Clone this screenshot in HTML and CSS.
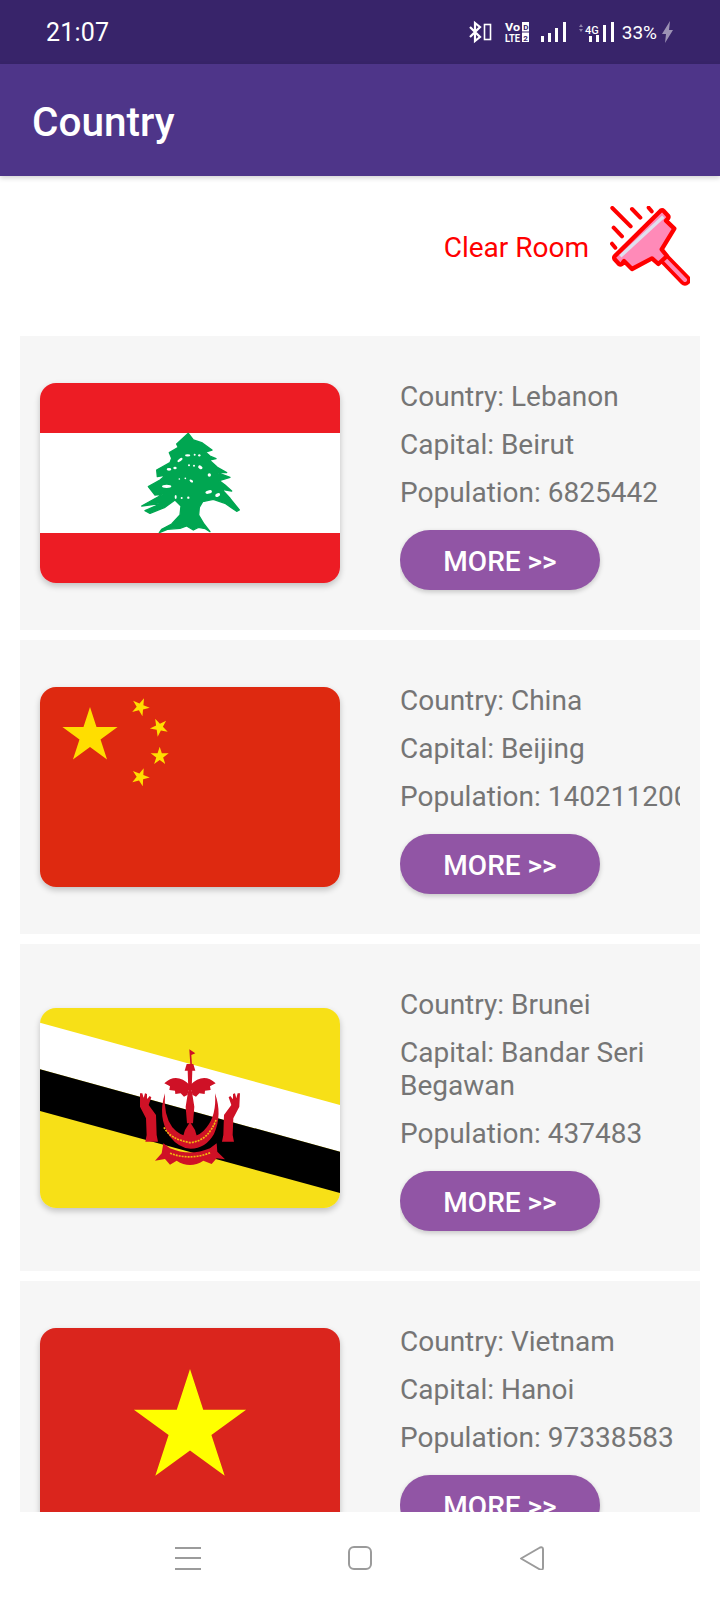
FILE: index.html
```html
<!DOCTYPE html>
<html lang="en">
<head>
<meta charset="utf-8">
<title>Country</title>
<link rel="stylesheet" href="styles.css">
</head>
<body>
<div class="screen">
  <header class="status">
    <span class="time">21:07</span>
    <div class="status-icons">
      <svg class="si si-bt" viewBox="0 0 24 20"><path d="M1 5l10 10-5 4V1l5 4L1 15" fill="none" stroke="#fff" stroke-width="2.200"/><rect x="15.5" y="2.500" width="6" height="15" fill="none" stroke="#fff" stroke-width="1.600"/></svg>
      <svg class="si si-volte" viewBox="0 0 24 20"><text x="0" y="9" class="si-t" textLength="15" lengthAdjust="spacingAndGlyphs">Vo</text><text x="0" y="19.500" class="si-t" textLength="15" lengthAdjust="spacingAndGlyphs">LTE</text><rect x="17" y="0" width="7" height="9.500" fill="#fff"/><rect x="17" y="10.500" width="7" height="9.500" fill="#fff"/><text x="18.200" y="8" class="si-d">D</text><text x="18.200" y="18.500" class="si-d">2</text></svg>
      <svg class="si si-sig" viewBox="0 0 25 20"><rect x="0" y="14" width="3" height="6" fill="#fff"/><rect x="7" y="11" width="3" height="9" fill="#fff"/><rect x="14" y="6" width="3" height="14" fill="#fff"/><rect x="22" y="0" width="3" height="20" fill="#fff"/></svg>
      <svg class="si si-4g" viewBox="0 0 37 20"><path d="M2 5l2-3 2 3zM2 7l2 3 2-3z" fill="#8f84ab"/><text x="8" y="11.500" class="si-g">4G</text><rect x="12" y="14" width="3" height="6" fill="#fff"/><rect x="19" y="13" width="3" height="7" fill="#fff"/><rect x="26" y="3" width="3" height="17" fill="#fff"/><rect x="34" y="0" width="3" height="20" fill="#fff"/></svg>
      <span class="batt">33%</span>
      <svg class="si si-bolt" viewBox="0 0 11 22"><path d="M8 0L0 13h4L3 22l8-13H7z" fill="#9c92b5"/></svg>
    </div>
  </header>
  <div class="appbar"><h1 class="title">Country</h1></div>
  <main class="content">
    <div class="clear-row">
      <span class="clear-label">Clear Room</span>
      <svg class="broom" viewBox="570 48 240 240">
        <g fill="none" stroke="#f00" stroke-linecap="round" stroke-width="12">
          <path d="M577 54l55 55M636 57l25 26M686 53l9 11M581 113l25 26M576 161l10 12"/>
        </g>
        <path d="M727 200l68 70" stroke="#f00" stroke-width="34" stroke-linecap="round"/>
        <path d="M727 200l68 70" stroke="#ff8ab8" stroke-width="12" stroke-linecap="round"/>
        <path d="M584 199L722 62q5-3 9 1l13 14q3 4 0 8l-6 7 25 24-38 62 16 20-26 24-19-17-60 32-24-24-6 9q-5 3-9 0l-13-14q-3-5 0-9z" fill="#ff8ab8" stroke="#f00" stroke-width="13" stroke-linejoin="round"/>
        <path d="M601 199L730 80" stroke="#dfe0ee" stroke-width="10"/>
      </svg>
    </div>
    <div class="list">
      <article class="card">
        <svg class="flag" viewBox="0 0 300 200">
          <rect width="300" height="200" fill="#ed1c24"/>
          <rect y="50" width="300" height="100" fill="#fff"/>
          <g transform="translate(90 37) scale(.3333)">
            <path fill="#00a651" stroke="#00a651" stroke-width="4" stroke-linejoin="round" d="M175 40L190 60L215 68L246 90L226 96L240 108L258 116L238 120L262 142L290 158L262 158L300 172L268 182L285 195L305 213L275 208L300 235L328 270L320 274L285 250L250 238L218 245L208 262L206 285L222 312L240 335L226 326L205 322L190 330L170 318L150 325L112 328L88 338L95 328L125 312L150 285L153 258L135 240L105 262L60 280L45 272L95 250L35 258L100 222L75 225L55 200L90 180L108 165L82 170L80 150L120 128L125 115L118 98L145 82L140 72z"/>
            <g fill="#fff">
              <ellipse cx="150" cy="120" rx="9" ry="4" transform="rotate(-35 150 120)"/>
              <ellipse cx="173" cy="106" rx="8" ry="3.500"/><circle cx="194" cy="104" r="3"/><circle cx="208" cy="106" r="3.500"/>
              <ellipse cx="117" cy="148" rx="7" ry="4"/><ellipse cx="135" cy="144" rx="5" ry="3.500"/>
              <circle cx="177" cy="136" r="3"/><circle cx="192" cy="137" r="3"/><ellipse cx="211" cy="142" rx="7" ry="5" transform="rotate(30 211 142)"/>
              <circle cx="238" cy="165" r="5"/><circle cx="148" cy="177" r="2.500"/><circle cx="166" cy="175" r="2.500"/><ellipse cx="184" cy="183" rx="6" ry="3.500" transform="rotate(35 184 183)"/>
              <ellipse cx="110" cy="199" rx="14" ry="5"/><ellipse cx="236" cy="216" rx="10" ry="5" transform="rotate(-15 236 216)"/><ellipse cx="263" cy="225" rx="8" ry="5" transform="rotate(-30 263 225)"/>
              <ellipse cx="137" cy="231" rx="3" ry="6"/><circle cx="155" cy="234" r="3"/><circle cx="175" cy="233" r="3.500"/>
            </g>
          </g>
        </svg>
        <div class="info">
          <p class="line">Country: Lebanon</p>
          <p class="line">Capital: Beirut</p>
          <p class="line pop">Population: 6825442</p>
          <button class="more">MORE &gt;&gt;</button>
        </div>
      </article>
      <article class="card">
        <svg class="flag" viewBox="0 0 300 200">
          <defs><polygon id="star" points="0,-1 .2245,-.309 .951,-.309 .363,.118 .588,.809 0,.382 -.588,.809 -.363,.118 -.951,-.309 -.2245,-.309"/></defs>
          <rect width="300" height="200" fill="#de2910"/>
          <g fill="#ffde00">
            <use href="#star" transform="translate(50 49) scale(29)"/>
            <use href="#star" transform="translate(100.300 20) rotate(23) scale(9.500)"/>
            <use href="#star" transform="translate(119.300 40.300) rotate(46) scale(9.500)"/>
            <use href="#star" transform="translate(119.700 69.300) scale(9.500)"/>
            <use href="#star" transform="translate(100.300 90) rotate(21) scale(9.500)"/>
          </g>
        </svg>
        <div class="info">
          <p class="line">Country: China</p>
          <p class="line">Capital: Beijing</p>
          <p class="line pop">Population: 1402112000</p>
          <button class="more">MORE &gt;&gt;</button>
        </div>
      </article>
      <article class="card">
        <svg class="flag" viewBox="0 0 300 200">
          <rect width="300" height="200" fill="#f7e017"/>
          <path d="M0 14.700L300 97v46.700L0 61.300z" fill="#fff"/>
          <path d="M0 61.300L300 143.700V185L0 103z" fill="#000"/>
          <g transform="translate(80 32) scale(.3333)">
            <g fill="#cf1126">
              <path d="M208 28l18 12-12 5 2 30h-5z"/>
              <path d="M194 92l6-20h20l6 20z"/>
              <path d="M210 136Q170 96 133 130L150 139L148 150L165 152L166 162L182 160L192 170L203 164L205 150H215L217 164L228 170L238 160L254 162L255 152L272 150L270 139L287 130Q250 96 210 136z"/>
              <path d="M203 90h14l-2 60 8 50-4 50h-18l-4-50 8-50z"/>
              <path d="M186 300l9-30 15-24 15 24 9 30q-24 10-48 0z"/>
              <path d="M135 160Q112 230 148 288Q178 326 212 326Q257 326 282 282Q308 225 285 160Q290 225 260 262Q240 290 212 290Q180 290 157 262Q130 225 135 160z"/>
              <path d="M60 160l7 0 4 15 4-15 6 2 0 16 8-10 5 4-8 23 22 30 2 60 4 20H76l4-20-2-50-18-35z"/>
              <path d="M360 160l-7 0-4 15-4-15-6 2 0 16-8-10-5 4 8 23-22 30-2 60-4 20h36l-4-20 2-50 18-35z"/>
              <path d="M130 310L150 325Q210 350 270 325L290 310L292 335L315 358L290 355L275 372L250 362Q210 388 170 362L150 374L135 357L105 362L125 340z"/>
            </g>
            <g fill="none" stroke="#f2b80f" stroke-width="5" stroke-dasharray="6 3">
              <path d="M132 262Q150 298 212 308Q265 302 288 240"/>
              <path d="M150 340Q210 362 272 338"/>
            </g>
          </g>
        </svg>
        <div class="info">
          <p class="line">Country: Brunei</p>
          <p class="line">Capital: Bandar Seri Begawan</p>
          <p class="line pop">Population: 437483</p>
          <button class="more">MORE &gt;&gt;</button>
        </div>
      </article>
      <article class="card">
        <svg class="flag" viewBox="0 0 300 200">
          <rect width="300" height="200" fill="#da251d"/>
          <use href="#star" fill="#ff0" transform="translate(150 100) scale(59)"/>
        </svg>
        <div class="info">
          <p class="line">Country: Vietnam</p>
          <p class="line">Capital: Hanoi</p>
          <p class="line pop">Population: 97338583</p>
          <button class="more">MORE &gt;&gt;</button>
        </div>
      </article>
    </div>
  </main>
  <nav class="navbar">
    <svg class="nav-ic" viewBox="0 0 26 24"><path d="M0 2h26M0 12h26M0 23h26" stroke="#9b9b9b" stroke-width="2"/></svg>
    <svg class="nav-ic" viewBox="0 0 26 24"><rect x="2" y="1" width="22" height="22" rx="5" fill="none" stroke="#9b9b9b" stroke-width="2"/></svg>
    <svg class="nav-ic" viewBox="0 0 26 24"><path d="M2 12.500L21 1.500q3-1 3 2v18q0 3-3 2z" fill="none" stroke="#9b9b9b" stroke-width="2" stroke-linejoin="round"/></svg>
  </nav>
</div>
</body>
</html>
```

FILE: styles.css
```css
* { box-sizing: border-box; }
html, body { margin: 0; padding: 0; background: #fff; }
body { font-family: Roboto, "Liberation Sans", sans-serif; }
.screen { width: 720px; height: 1600px; display: flex; flex-direction: column; overflow: hidden; }

.status { height: 64px; flex: none; background: #38246a; color: #fff; display: flex; align-items: center; justify-content: space-between; padding: 0 47px 0 46px; }
.time { font-size: 25px; letter-spacing: .2px; }
.status-icons { display: flex; align-items: center; }
.si { display: block; height: 20px; overflow: visible; }
.si-bt { width: 24px; margin-right: 12px; }
.si-volte { width: 24px; margin-right: 12px; }
.si-sig { width: 25px; margin-right: 11px; }
.si-4g { width: 37px; margin-right: 8px; }
.si-t { font: 700 11px Roboto, sans-serif; fill: #fff; }
.si-d { font: 700 8px Roboto, sans-serif; fill: #38246a; }
.si-g { font: 500 11px Roboto, sans-serif; fill: #fff; }
.batt { font-size: 19px; margin-right: 5px; }
.si-bolt { width: 11px; height: 22px; }

.appbar { height: 112px; flex: none; background: #4e3589; display: flex; align-items: center; padding: 0 32px; box-shadow: 0 2px 5px rgba(0, 0, 0, .18); position: relative; }
.title { margin: 4px 0 0; color: #fff; font-size: 40.5px; font-weight: 500; }

.content { flex: 1; min-height: 0; overflow: hidden; }
.clear-row { height: 160px; display: flex; align-items: flex-start; justify-content: flex-end; gap: 21px; padding: 30px 30px 0 0; }
.clear-label { color: #f00; font-size: 28px; line-height: 33px; margin-top: 25px; }
.broom { width: 80px; height: 80px; display: block; }

.list { display: flex; flex-direction: column; gap: 10px; padding: 0 20px; }
.card { background: #f6f6f6; display: flex; align-items: center; gap: 60px; padding: 0 20px; flex: none; }
.flag { width: 300px; height: 200px; flex: none; border-radius: 16px; display: block; box-shadow: 0 3px 6px rgba(0, 0, 0, .22); }
.info { width: 280px; overflow: hidden; display: flex; flex-direction: column; gap: 15px; padding: 44px 0 40px; }
.line { margin: 0; color: #757575; font-size: 28px; line-height: 33px; }
.pop { white-space: nowrap; }
.more { width: 200px; height: 60px; margin-top: 6px; border: 0; border-radius: 30px; background: #9155a5; color: #fff; font-family: inherit; font-size: 28px; font-weight: 500; box-shadow: 0 2px 5px rgba(0, 0, 0, .2); padding: 2px 0 0; }

.navbar { height: 88px; flex: none; background: #fff; display: flex; justify-content: center; align-items: flex-start; gap: 146px; padding: 34px 0 0; position: relative; }
.nav-ic { width: 26px; height: 24px; display: block; }
```
